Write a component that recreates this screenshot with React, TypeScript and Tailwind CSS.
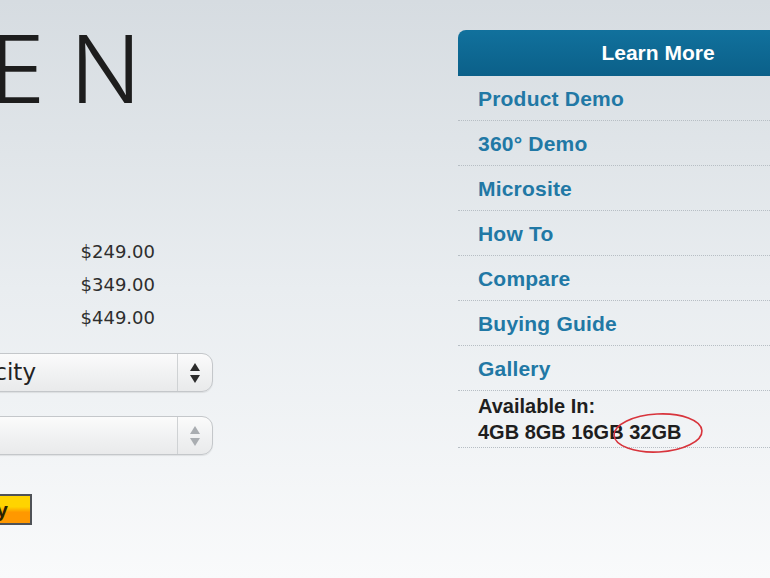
const links = ["Product Demo", "360° Demo", "Microsite", "How To", "Compare", "Buying Guide", "Gallery"];
const prices = ["$249.00", "$349.00", "$449.00"];

function Stepper({ dim }: { dim?: boolean }) {
  const c = dim ? "#a9adb1" : "#2b2b2b";
  return (
    <svg width="12" height="22" viewBox="0 0 12 22">
      <path d="M6 1 L11 9 L1 9 Z" fill={c} />
      <path d="M6 21 L11 13 L1 13 Z" fill={c} />
    </svg>
  );
}

function SelectBox({ label, dim }: { label?: string; dim?: boolean }) {
  return (
    <div className="-ml-[200px] flex h-[39px] w-[413px] items-stretch rounded-[11px] border border-[#c4c7ca] bg-gradient-to-b from-[#fbfbfb] via-[#f1f2f3] to-[#e9eaeb] shadow-[0_1px_1px_rgba(0,0,0,0.08)]">
      <div className="flex w-[235px] items-center justify-end text-[23px] text-[#222] [font-family:'DejaVu_Sans',sans-serif]">
        {label}
      </div>
      <div className="flex-1" />
      <div className="flex w-[35px] items-center justify-center border-l border-[#cfd2d4]">
        <Stepper dim={dim} />
      </div>
    </div>
  );
}

export default function App() {
  return (
    <div className="relative flex h-[578px] w-[770px] overflow-hidden bg-gradient-to-b from-[#d6dce1] via-[#e9edf0] to-[#f9fafb]">
      {/* left column, clipped by the window edge */}
      <div className="flex w-[213px] shrink-0 flex-col">
        <div className="-ml-[10px] mt-[18px] h-[102px] text-[93px] leading-[102px] font-light tracking-[25px] text-[#1d1d1d] [font-family:Inter,sans-serif]">
          EN
        </div>
        <div className="mt-[115px] flex w-[155px] flex-col items-end text-[18px] leading-[33px] text-[#2e2e2e] [font-family:'DejaVu_Sans',sans-serif]">
          {prices.map((p) => (
            <span key={p}>{p}</span>
          ))}
        </div>
        <div className="mt-[19px]">
          <SelectBox label="Capacity" />
        </div>
        <div className="mt-[24px]">
          <SelectBox dim />
        </div>
        <div className="-ml-[80px] mt-[39px] flex h-[31px] w-[112px] items-center justify-end border-2 border-[#4f5257] bg-gradient-to-b from-[#ffd400] from-40% to-[#ff9800] to-60% pr-[22px] text-[21px] font-bold text-[#2a2200] [font-family:'Liberation_Sans',sans-serif]">
          Buy
        </div>
      </div>

      <div className="w-[245px] shrink-0" />

      {/* Learn More panel */}
      <div className="mt-[30px] w-[400px] shrink-0 [font-family:'Liberation_Sans',Arial,sans-serif]">
        <div className="flex h-[46px] items-center justify-center rounded-tl-[8px] bg-gradient-to-b from-[#11719d] to-[#0b6089] text-[21px] font-bold text-white">
          Learn More
        </div>
        {links.map((l) => (
          <div
            key={l}
            className="flex h-[45px] items-center border-b border-dotted border-[#b7bec4] pl-[20px] pt-[2px] text-[21px] tracking-[0.2px] font-bold text-[#2178a5]"
          >
            {l}
          </div>
        ))}
        <div className="relative flex h-[57px] flex-col justify-center border-b border-dotted border-[#b7bec4] pl-[20px] text-[20px] leading-[26px] font-bold text-[#1e1e1e]">
          <span>Available In:</span>
          <span>4GB 8GB 16GB 32GB</span>
          <svg className="absolute left-[154px] top-[20px]" width="92" height="44" viewBox="0 0 92 44">
            <ellipse cx="46" cy="22" rx="44" ry="19" fill="none" stroke="#d8343c" strokeWidth="1.6" transform="rotate(-3 46 22)" />
          </svg>
        </div>
      </div>
    </div>
  );
}
